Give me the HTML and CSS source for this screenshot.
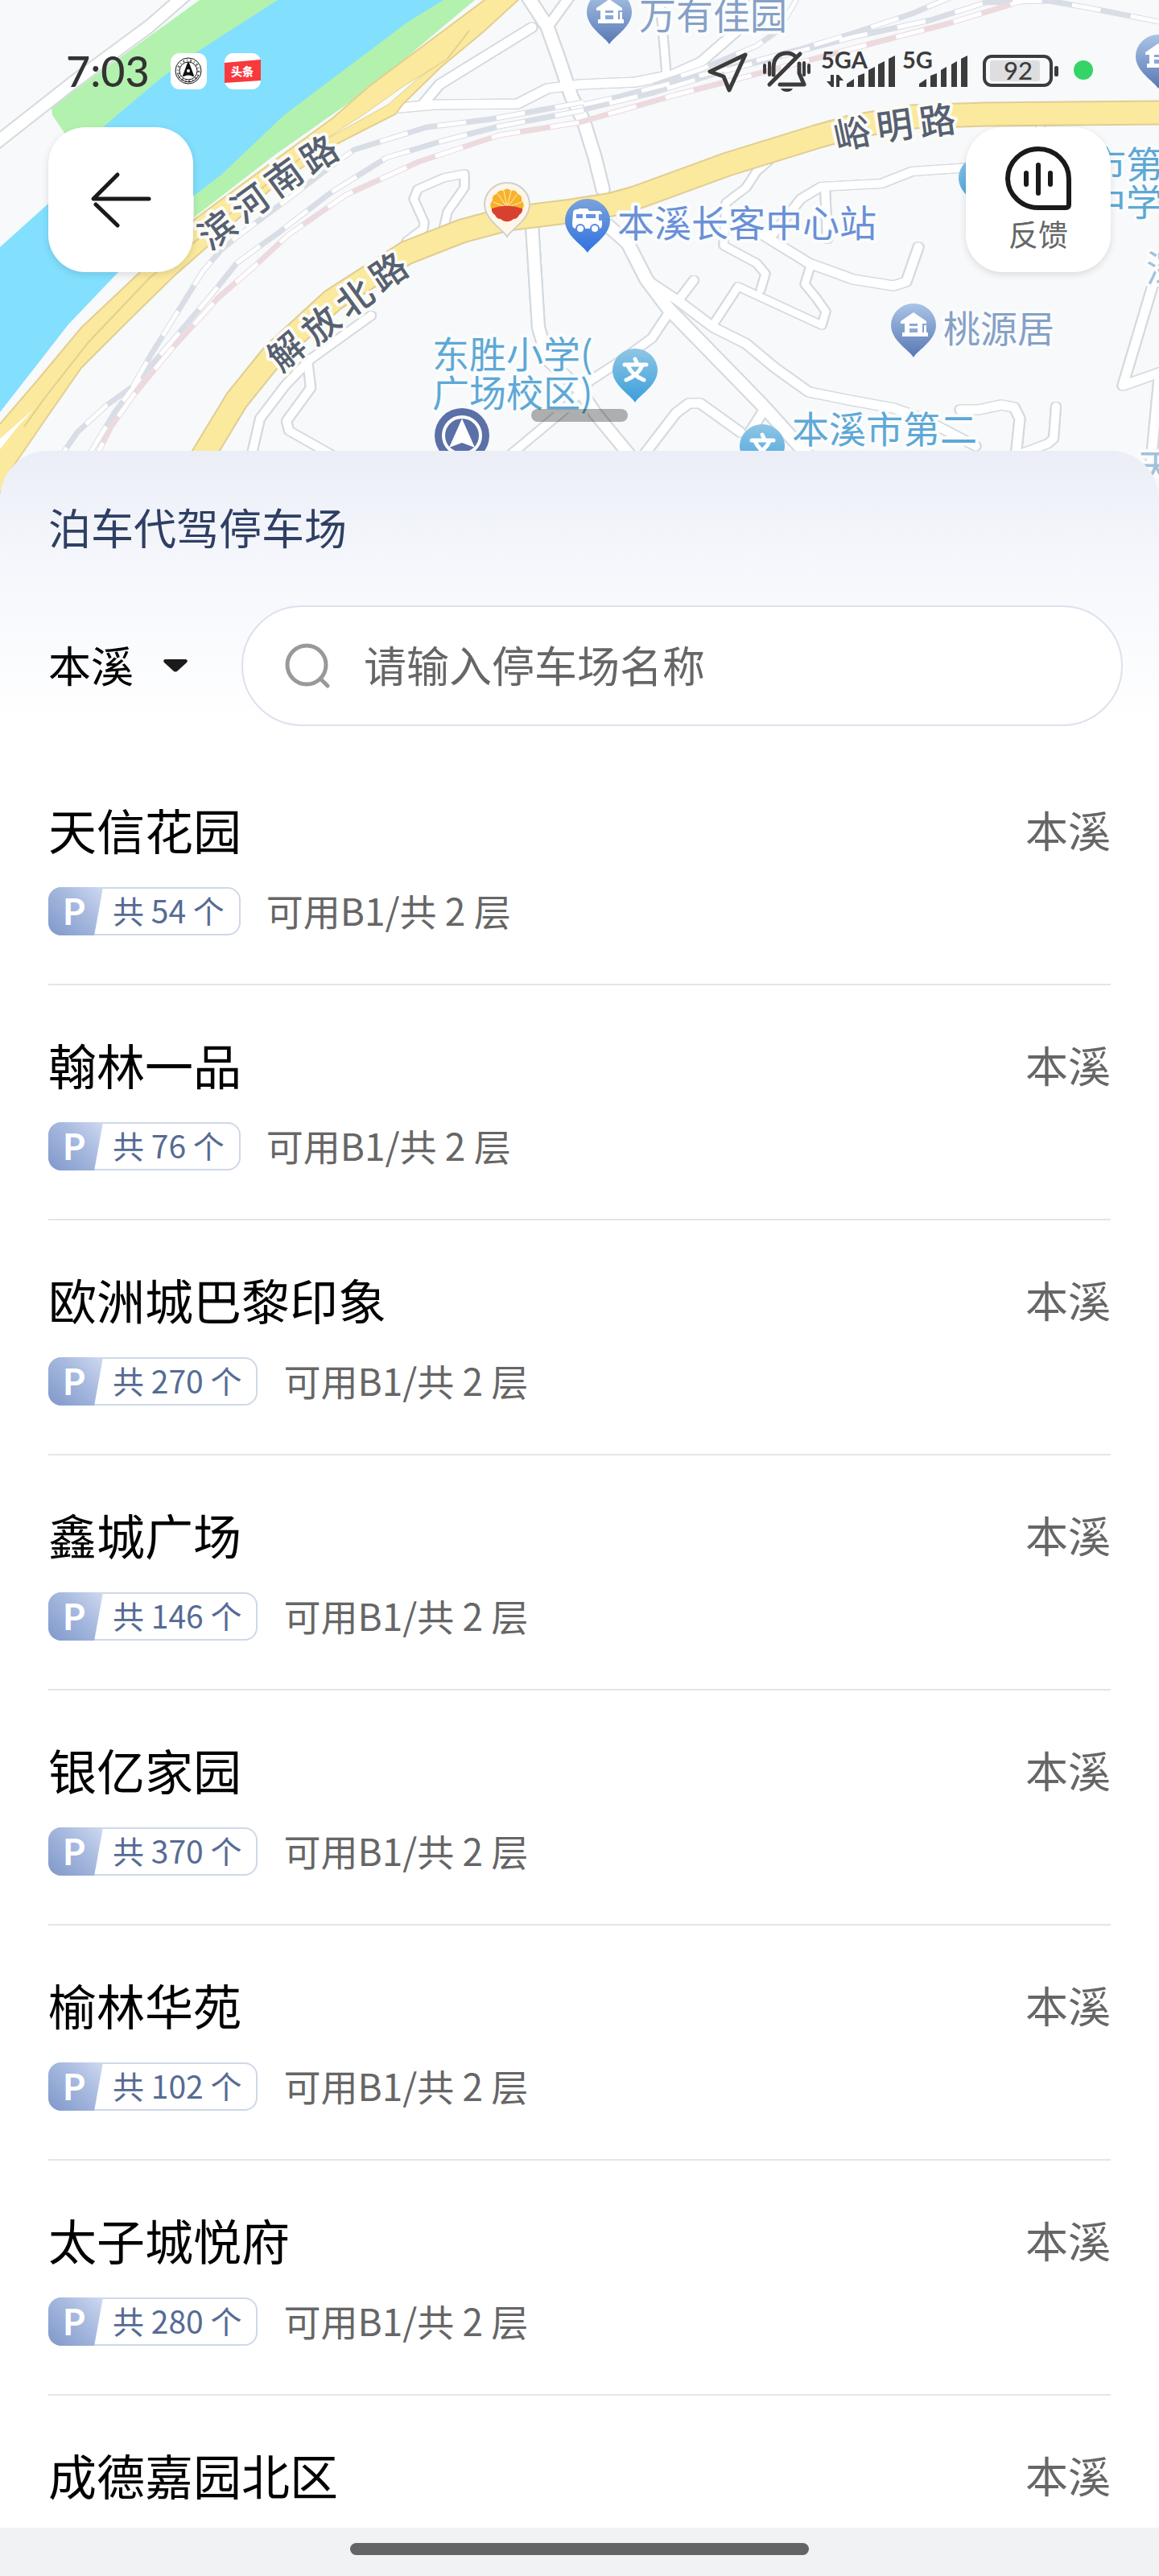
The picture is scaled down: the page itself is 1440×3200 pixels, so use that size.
FILE: index.html
```html
<!DOCTYPE html>
<html lang="zh-CN">
<head>
  <meta charset="UTF-8">
  <meta name="viewport" content="width=device-width, initial-scale=1">
  <title>泊车代驾停车场</title>
  <link rel="stylesheet" href="styles.css">
</head>
<body>
  <div class="app">
    <header class="map-header">
      <svg class="map" viewBox="0 0 1440 620" preserveAspectRatio="xMidYMin slice" aria-hidden="true">
        <defs>
          <linearGradient id="g-house" x1="0" y1="0" x2="0" y2="1">
            <stop offset="0" stop-color="#a9c4e6"/><stop offset="1" stop-color="#5878b4"/>
          </linearGradient>
          <linearGradient id="g-bus" x1="0" y1="0" x2="0" y2="1">
            <stop offset="0" stop-color="#7ba2dc"/><stop offset="1" stop-color="#2f72e0"/>
          </linearGradient>
          <linearGradient id="g-school" x1="0" y1="0" x2="0" y2="1">
            <stop offset="0" stop-color="#8fc6e6"/><stop offset="1" stop-color="#3a9edb"/>
          </linearGradient>
          <path id="pin" d="M0 67 C-5 58 -28 46 -28 27 A28 27 0 0 1 28 27 C28 46 5 58 0 67Z"/>
          <g id="pin-house">
            <use href="#pin" fill="url(#g-house)"/>
            <path d="M-16 22 L0 11 L16 22 V25 H-16Z" fill="#fff"/>
            <path d="M-11 24 H11 V36 H-11Z M-14 36 H18 V41 H-14Z M13 27 H16 V38 H13Z" fill="#fff"/>
            <path d="M-5 25 H5 V28 H-5Z M-5 31 H5 V36 H-5Z" fill="#8ca8d6"/>
          </g>
          <g id="pin-school">
            <use href="#pin" fill="url(#g-school)"/>
            <path d="M-13 20 H14 M0 13 L2 17 M-9 21 Q-4 33 11 39 M9 21 Q4 33 -11 39" fill="none" stroke="#fff" stroke-width="5" stroke-linecap="round"/>
          </g>
          <path id="rail-a" d="M725 127 L610 148 L530 158 L440 186 L400 215 L370 238 L300 290 L275 310 L252 337 L211 403 L188 440 L165 480 L133 503 L96 537 L76 566"/>
          <path id="rail-b" d="M725 137 L620 157 L550 175 L480 196 L410 240 L345 290 L321 307 L294 327 L262 367 L211 427 L174 470 L142 513 L110 566"/>
          <path id="rail-c" d="M1185 -5 L1133 17 L1064 40 L995 61 L839 102 L770 120 L725 130"/>
          <path id="rail-d" d="M1440 27 L1354 10 L1303 1 L1225 3 L1156 25 L1060 46 L904 87 L812 115 L725 136"/>
          <path id="rail-e" d="M992 -5 L968 37 L940 57 L871 86 L812 106"/>
          <path id="rail-p" d="M1290 -5 L1179 29 L1087 53 L959 87 L839 118 L720 152 L620 168 L520 201 L430 242 L358 292 L317 330 L271 370 L211 436 L165 492 L138 530 L120 566"/>
          <path id="main-road" d="M251 568 L294 497 L340 440 L413 373 L505 314 L574 287 L630 272 L703 263 L760 254 L789 246 L904 204 L1014 170 L1060 157 L1133 145 L1225 142 L1445 140"/>
        </defs>

        <rect width="1440" height="620" fill="#f7f9fb"/>

        <!-- river and banks -->
        <path d="M248 0 L64 133 L65 143 L80 165 L140 190 L241 200 L241 270 L342 192 L459 110 L590 0Z" fill="#b2f2ae"/>
        <path d="M345 0 L244 65 L200 97 L155 135 L128 158 L60 253 L0 307 V512 L85 403 L147 338 L241 243 L275 217 L353 143 L507 27 L551 0Z" fill="#82dffe"/>

        <!-- side streets -->
        <g class="streets">
          <path stroke-width="14" d="M230 -6 L185 33 L90 103 L-8 180"/>
          <path stroke-width="15" d="M652 -10 L680 33 L695 75 L710 120 L725 150 L739 195 L749 235"/>
          <path stroke-width="11" d="M712 -10 L680 34 M661 34 L546 105 L525 130"/>
          <path stroke-width="11" d="M496 134 L540 130 L643 129 L680 110 L720 105 L789 102 L835 93 L871 77 L917 37 L942 -5"/>
          <path stroke-width="9" d="M819 -5 L823 33 L828 92"/>
          <path stroke-width="9" d="M551 285 L556 263 L577 233 L577 216 L551 221 L519 235 L514 247 L527 276 L526 284 L505 300"/>
          <path stroke-width="14" d="M661 280 L669 407 L681 447 L720 484 L740 514 L782 565"/>
          <path stroke-width="15" d="M755 280 L780 302 L803 347 L830 383 L947 503 L1003 565"/>
          <path stroke-width="11" d="M807 350 L843 374 L887 407 L927 427 L963 457 L1005 487 L1055 497 L1110 507 L1147 520 L1212 554"/>
          <path stroke-width="10" d="M843 373 L862 348 M830 390 L810 420 L773 447 L733 473 L700 510 L634 565"/>
          <path stroke-width="9" d="M887 402 L917 356 L1021 404 L1026 387 L1014 370 L1000 353 L1007 330"/>
          <path stroke-width="9" d="M945 360 L951 340 L940 327 L899 305 L902 252 L927 233 L940 213 L955 200"/>
          <path stroke-width="11" d="M945 290 L1005 327 L1060 347 L1110 355 L1126 350 L1133 330 L1141 307"/>
          <path stroke-width="10" d="M959 293 L995 247 L1020 232 L1095 228 L1133 213 L1205 208 M1025 232 L1028 297"/>
          <path stroke-width="11" d="M800 565 L840 513 L856 501 L870 501 L920 537 M950 508 L930 540"/>
          <path stroke-width="11" d="M1193 509 L1216 509 L1244 503 L1260 506 L1267 520 L1262 568"/>
          <path stroke-width="10" d="M1312 505 L1309 545 L1302 551 L1270 563"/>
          <path stroke-width="11" d="M1435 345 L1395 479 L1446 461 M1440 470 L1430 575"/>
          <path stroke-width="10" d="M461 392 L386 446 L355 478 L323 520 L312 568 M382 446 L386 482 L356 523 L359 535 L412 565"/>
          <path stroke-width="8" d="M1290 165 L1294 152 L1325 150 M1445 222 L1436 240 L1448 252"/>
        </g>

        <!-- railways -->
        <g class="rail">
          <use href="#rail-a"/><use href="#rail-b"/><use href="#rail-c"/><use href="#rail-d"/><use href="#rail-e"/>
          <use href="#rail-p" class="rail-pink"/>
        </g>
        <g class="rail-dash">
          <use href="#rail-a"/><use href="#rail-b"/><use href="#rail-c"/><use href="#rail-d"/><use href="#rail-e"/><use href="#rail-p"/>
        </g>

        <!-- main roads -->
        <path d="M606 -3 L459 107 L413 147 L340 200 L241 273 L174 338 L101 407 L46 473 L-3 530 V620 L14 583 L55 523 L101 457 L161 397 L216 343 L257 307 L340 232 L420 178 L455 160 L491 142 L500 130 L547 84 L600 40 L647 -3Z" fill="#fbe99d" stroke="#e3cf90" stroke-width="2"/>
        <path d="M556 73 L520 97 L482 130 L400 176 L455 140 L500 108Z" fill="#f9fafc" stroke="#e3cf90"/>
        <path d="M583 38 L556 73 M400 176 L330 230 L186 345 L110 425 L55 495 L30 530" fill="none" stroke="#e3cf90" stroke-width="2"/>
        <path d="M42 508 L22 530 L0 558 V545Z" fill="#fff"/>
        <g fill="none" stroke-linejoin="round">
          <use href="#main-road" stroke="#e0cd93" stroke-width="31"/>
          <use href="#main-road" stroke="#fbe99d" stroke-width="27"/>
        </g>

        <!-- road names follow the road, one glyph at a time -->
        <g class="road-name">
          <text transform="translate(268 283) rotate(-36)">滨</text>
          <text transform="translate(309 250) rotate(-36)">河</text>
          <text transform="translate(351 218) rotate(-36)">南</text>
          <text transform="translate(395 189) rotate(-32)">路</text>
          <text transform="translate(354 434) rotate(-40)">解</text>
          <text transform="translate(397 401) rotate(-40)">放</text>
          <text transform="translate(439 368) rotate(-36)">北</text>
          <text transform="translate(481 335) rotate(-34)">路</text>
          <text transform="translate(1058 163) rotate(-12)">峪</text>
          <text transform="translate(1111 153) rotate(-8)">明</text>
          <text transform="translate(1164 147) rotate(-8)">路</text>
        </g>

        <!-- points of interest -->
        <g class="poi">
          <text class="poi-estate" x="794" y="36">万有佳园</text>
          <text class="poi-station" x="767" y="294">本溪长客中心站</text>
          <text class="poi-estate" x="1172" y="425">桃源居</text>
          <text class="poi-school" x="537" y="457">东胜小学(</text>
          <text class="poi-school" x="537" y="505">广场校区)</text>
          <text class="poi-school" x="984" y="550">本溪市第二</text>
          <text class="poi-school" x="1353" y="221">市第</text>
          <text class="poi-school" x="1353" y="268">中学</text>
          <text class="poi-faint" x="1424" y="350">深</text>
          <text class="poi-faint" x="1413" y="597">天</text>
        </g>
        <use href="#pin-house" x="757" y="-12"/>
        <use href="#pin-house" x="1135" y="377"/>
        <use href="#pin-house" x="1439" y="43"/>
        <use href="#pin-school" x="789" y="433"/>
        <use href="#pin-school" x="947" y="527"/>
        <use href="#pin-school" x="1219" y="194"/>
        <g transform="translate(730 247)">
          <use href="#pin" fill="url(#g-bus)"/>
          <path d="M-18 17 Q-18 13 -12 13 L-10 12 H0 L2 15 H14 Q18 15 18 19 V32 Q18 37 14 37 H-14 Q-19 37 -19 31Z" fill="#fff"/>
          <path d="M-14 19 H-6 V24 H-14Z M-2 19 H10 V24 H-2Z M14 19 H18 V27 H14Z" fill="#6a93dc"/>
          <circle cx="-9" cy="37" r="5" fill="#fff" stroke="#5588e0" stroke-width="2"/>
          <circle cx="9" cy="37" r="5" fill="#fff" stroke="#5588e0" stroke-width="2"/>
        </g>
        <g transform="translate(630 227)">
          <use href="#pin" fill="#fdf7ea" stroke="#d2cfcc" stroke-width="2"/>
          <path d="M-19 33 Q-23 27 -18 22 Q-19 15 -13 14 Q-10 8 -5 10 Q0 5 5 10 Q11 8 13 14 Q19 15 18 22 Q23 27 19 33Z" fill="#f8b12b"/>
          <path d="M0 31 L-17 24 M0 31 L-11 14 M0 31 L-4 10 M0 31 L5 10 M0 31 L12 15 M0 31 L18 24" stroke="#fff3c4" stroke-width="1"/>
          <path d="M-19 32 Q0 25 19 32 Q20 37 15 40 Q13 45 8 45 Q4 49 0 48 Q-4 49 -8 45 Q-13 45 -15 40 Q-20 37 -19 32Z" fill="#d8412f"/>
        </g>
        <g transform="translate(574 541)">
          <circle r="34" fill="#5a70a7"/>
          <circle r="23" fill="none" stroke="#fff" stroke-width="4"/>
          <path d="M0 -21 L16 15 L0 9 L-16 15Z" fill="#fff"/>
        </g>
      </svg>

      <div class="status-bar">
        <span class="clock">7:03</span>
        <svg class="app-icon" viewBox="0 0 45 45" aria-hidden="true">
          <rect width="45" height="45" rx="11" fill="#fff"/>
          <g fill="none" stroke="#111">
            <circle cx="22" cy="22" r="16"/>
            <circle cx="22" cy="22" r="11"/>
            <path d="M9 27 A14 14 0 0 0 35 27"/>
            <circle cx="22" cy="22" r="13" stroke-width="3" stroke-dasharray="2 3 1 3" opacity=".6"/>
          </g>
          <path d="M22 12 L28 28 Q22 25 16 28Z" fill="#111" stroke="#111" stroke-width="2" stroke-linejoin="round"/>
          <circle cx="22" cy="22" r="2" fill="#fff"/>
        </svg>
        <svg class="app-icon" viewBox="0 0 45 45" aria-hidden="true">
          <rect width="45" height="45" rx="11" fill="#fff"/>
          <path d="M0 12 L45 8 V34 L0 37Z" fill="#f8393d"/>
          <text x="22" y="28" text-anchor="middle" class="app-icon-text">头条</text>
        </svg>

        <svg class="status-icons" viewBox="876 58 488 60" aria-hidden="true">
          <g fill="none" stroke="#3c3c3c" stroke-linejoin="round" stroke-linecap="round">
            <path d="M926 68 L882 89 L899 95 L906 112Z" stroke-width="5"/>
            <path d="M961 93 V83 Q962 66 978 66 Q984 66 988 70 M993 79 V91 L999 105 H969" stroke-width="5"/>
            <path d="M956 105 L994 67" stroke-width="5"/>
            <path d="M950 81 V90 M956 78 V93 M1005 81 V90" stroke-width="4"/>
            <path d="M999 78 V93" stroke-width="4"/>
            <rect x="1223" y="70" width="83" height="36" rx="9" stroke-width="4"/>
          </g>
          <path d="M970 110 H985 Q983 114 978 114 Q972 114 970 110Z" fill="#3c3c3c"/>
          <rect x="1230" y="75" width="62" height="26" rx="3" fill="#dedee0"/>
          <g fill="#3c3c3c">
            <rect x="1310" y="82" width="5" height="13" rx="2"/>
            <path d="M1052 108 V104 L1061 98 V108Z M1066 108 V94 L1074 91 V108Z M1079 108 V87 L1087 83 V108Z M1091 108 V80 L1099 76 V108Z M1104 108 V73 L1112 69 V108Z"/>
            <path d="M1142 108 V104 L1151 98 V108Z M1156 108 V94 L1164 91 V108Z M1169 108 V87 L1176 83 V108Z M1182 108 V80 L1189 76 V108Z M1194 108 V73 L1202 69 V108Z"/>
            <path d="M1032 93 H1036 V108 H1033 L1027 101 H1032Z M1039 93 H1042 L1048 100 H1043 V108 H1039Z"/>
            <text x="1020" y="85" class="net-text">5GA</text>
            <text x="1121" y="85" class="net-text">5G</text>
            <text x="1265" y="99" text-anchor="middle" class="battery-text">92</text>
          </g>
          <circle cx="1346" cy="87" r="12" fill="#35d466"/>
        </svg>
      </div>

      <div class="map-actions">
        <button class="map-btn" type="button" aria-label="返回">
          <svg width="90" height="90" viewBox="0 0 90 90" fill="none" stroke="#1a1a1a" stroke-width="5" stroke-linecap="round" stroke-linejoin="round">
            <path d="M41 14 L11 44 H80"/>
            <path d="M14 51 L41 77"/>
          </svg>
        </button>
        <button class="map-btn" type="button">
          <svg width="90" height="84" viewBox="0 0 90 84" fill="none" stroke="#1a1a1a" stroke-width="6" stroke-linecap="round" stroke-linejoin="round">
            <path d="M45 3 A38 37 0 0 0 7 40 A38 37 0 0 0 45 76 H79 Q83 76 83 72 V40 A38 37 0 0 0 45 3Z"/>
            <path d="M30 33 V47 M45 23 V58 M60 33 V47"/>
          </svg>
          <span>反馈</span>
        </button>
      </div>

      <div class="drag-handle"></div>
    </header>

    <main class="sheet">
      <h1>泊车代驾停车场</h1>

      <form class="search-row">
        <label class="city">
          <select aria-label="城市">
            <option>本溪</option>
          </select>
          <svg width="32" height="18" viewBox="0 0 32 18" aria-hidden="true">
            <path d="M3 1 H29 Q32 2 30 5 L19 15 Q16 18 13 15 L2 5 Q0 2 3 1Z" fill="#1a1a1a"/>
          </svg>
        </label>
        <label class="search-box">
          <svg width="60" height="60" viewBox="0 0 60 60" fill="none" stroke="#999" stroke-width="5" stroke-linecap="round" aria-hidden="true">
            <circle cx="29" cy="29" r="24"/>
            <path d="M46 46 L55 55"/>
          </svg>
          <input type="search" placeholder="请输入停车场名称" aria-label="停车场名称">
        </label>
      </form>

      <ul class="lots">
        <li class="lot">
          <div class="lot-head"><h2>天信花园</h2><span class="lot-city">本溪</span></div>
          <div class="lot-info"><span class="badge"><b>P</b><span>共 54 个</span></span><span>可用B1/共 2 层</span></div>
        </li>
        <li class="lot">
          <div class="lot-head"><h2>翰林一品</h2><span class="lot-city">本溪</span></div>
          <div class="lot-info"><span class="badge"><b>P</b><span>共 76 个</span></span><span>可用B1/共 2 层</span></div>
        </li>
        <li class="lot">
          <div class="lot-head"><h2>欧洲城巴黎印象</h2><span class="lot-city">本溪</span></div>
          <div class="lot-info"><span class="badge"><b>P</b><span>共 270 个</span></span><span>可用B1/共 2 层</span></div>
        </li>
        <li class="lot">
          <div class="lot-head"><h2>鑫城广场</h2><span class="lot-city">本溪</span></div>
          <div class="lot-info"><span class="badge"><b>P</b><span>共 146 个</span></span><span>可用B1/共 2 层</span></div>
        </li>
        <li class="lot">
          <div class="lot-head"><h2>银亿家园</h2><span class="lot-city">本溪</span></div>
          <div class="lot-info"><span class="badge"><b>P</b><span>共 370 个</span></span><span>可用B1/共 2 层</span></div>
        </li>
        <li class="lot">
          <div class="lot-head"><h2>榆林华苑</h2><span class="lot-city">本溪</span></div>
          <div class="lot-info"><span class="badge"><b>P</b><span>共 102 个</span></span><span>可用B1/共 2 层</span></div>
        </li>
        <li class="lot">
          <div class="lot-head"><h2>太子城悦府</h2><span class="lot-city">本溪</span></div>
          <div class="lot-info"><span class="badge"><b>P</b><span>共 280 个</span></span><span>可用B1/共 2 层</span></div>
        </li>
        <li class="lot">
          <div class="lot-head"><h2>成德嘉园北区</h2><span class="lot-city">本溪</span></div>
        </li>
      </ul>
    </main>

    <footer class="nav-bar"><div class="nav-pill"></div></footer>
  </div>
</body>
</html>
```
FILE: styles.css
```css
* {
  box-sizing: border-box;
}
body {
  margin: 0;
  font-family: "Noto Sans CJK SC", "Noto Sans", sans-serif;
  color: #000;
  background: #fff;
}
button, input, select {
  font: inherit;
  border: 0;
  padding: 0;
  background: none;
}
h1, h2, ul {
  margin: 0;
  padding: 0;
  font-weight: 400;
}
.app {
  display: flex;
  flex-direction: column;
  height: 100vh;
  overflow: hidden;
}

/* map */
.map-header {
  position: relative;
  flex: none;
  display: flex;
  flex-direction: column;
  height: 560px;
  padding: 58px 60px 0;
}
.map {
  position: absolute;
  top: 0;
  left: 0;
  width: 100%;
  height: 620px;
}
.streets, .rail, .rail-dash {
  fill: none;
  stroke-linecap: round;
  stroke-linejoin: round;
}
/* the shadows draw one outline round the joined streets */
.streets {
  stroke: #fff;
  filter: drop-shadow(2px 0 0 #d5dade) drop-shadow(-2px 0 0 #d5dade) drop-shadow(0 1px 0 #d5dade) drop-shadow(0 -1px 0 #d5dade);
}
.rail {
  stroke: #d9dde5;
  stroke-width: 7px;
  stroke-linecap: butt;
}
.rail-pink {
  stroke: #ecdadf;
}
.rail-dash {
  stroke: #fff;
  stroke-width: 5px;
  stroke-linecap: butt;
  stroke-dasharray: 36 38;
}
.road-name text {
  font-size: 45px;
  font-weight: 500;
  fill: #566072;
  stroke: #fbfbf6;
  stroke-width: 8px;
  stroke-linejoin: round;
  paint-order: stroke;
  text-anchor: middle;
  dominant-baseline: central;
}
.poi text {
  font-size: 46px;
  stroke: #fafcfd;
  stroke-width: 8px;
  stroke-linejoin: round;
  paint-order: stroke;
}
.poi .poi-estate {
  fill: #86a0c6;
}
.poi .poi-station {
  fill: #6a90d6;
}
.poi .poi-school {
  fill: #5ea8d5;
}
.poi .poi-faint {
  fill: #a0c2da;
}

/* status bar */
.status-bar {
  position: relative;
  display: flex;
  align-items: center;
  gap: 22px;
  height: 60px;
  margin-right: 16px;
  padding-left: 22px;
}
.clock {
  width: 108px;
  font-family: Lato, sans-serif;
  font-size: 52px;
  font-weight: 500;
  line-height: 60px;
  color: #333;
}
.app-icon {
  width: 45px;
  height: 45px;
}
.app-icon-text {
  font-size: 14px;
  font-weight: 900;
  fill: #fff;
}
.status-icons {
  width: 488px;
  height: 60px;
  margin-left: auto;
}
.net-text {
  font-family: Lato, sans-serif;
  font-size: 29px;
  font-weight: 700;
}
.battery-text {
  font-family: Lato, sans-serif;
  font-size: 31px;
  font-weight: 500;
}

.map-actions {
  position: relative;
  display: flex;
  justify-content: space-between;
  margin-top: 40px;
}
.map-btn {
  display: flex;
  flex-direction: column;
  align-items: center;
  justify-content: center;
  width: 180px;
  height: 180px;
  border-radius: 46px;
  background: #fff;
  box-shadow: 0 3px 10px rgba(0, 0, 0, 0.12);
  font-size: 37px;
  line-height: 48px;
  color: #666;
}
.drag-handle {
  position: relative;
  width: 120px;
  height: 16px;
  margin: 170px auto 0;
  border-radius: 8px;
  background: rgba(0, 0, 0, 0.3);
}

/* list sheet */
.sheet {
  position: relative;
  flex: 1;
  min-height: 0;
  overflow: hidden;
  padding: 60px 60px 0;
  border-radius: 60px 60px 0 0;
  background: linear-gradient(#ebeef6, #f5f7fc 140px, #fff 340px);
}
h1 {
  font-size: 53px;
  line-height: 68px;
  color: #2f3f63;
}
.search-row {
  display: flex;
  align-items: center;
  gap: 66px;
  margin: 64px -15px 30px 0;
}
.city {
  display: flex;
  align-items: center;
  gap: 36px;
}
.city select {
  appearance: none;
  padding-bottom: 4px;
  font-size: 53px;
  line-height: 68px;
  color: #000;
}
.search-box {
  flex: 1;
  display: flex;
  align-items: center;
  gap: 40px;
  height: 150px;
  padding: 0 50px;
  border: 2px solid #dde1ed;
  border-radius: 75px;
  background: #fff;
}
.search-box input {
  flex: 1;
  min-width: 0;
  padding-bottom: 4px;
  font-size: 53px;
  line-height: 68px;
  outline: 0;
  appearance: none;
}
.search-box input::placeholder {
  color: #666;
  opacity: 1;
}
.lots {
  list-style: none;
}
.lot {
  padding: 60px 0;
  border-bottom: 2px solid #e5e5e5;
}
.lot-head {
  display: flex;
  align-items: center;
  justify-content: space-between;
  margin-bottom: 34px;
}
.lot h2 {
  font-size: 60px;
  line-height: 76px;
}
.lot-city {
  font-size: 53px;
  line-height: 76px;
  color: #666;
}
.lot-info {
  display: flex;
  align-items: flex-start;
  gap: 32px;
  height: 60px;
  font-size: 46px;
  line-height: 56px;
  color: #666;
}
.badge {
  display: flex;
  height: 60px;
  padding-right: 20px;
  border-radius: 16px;
  box-shadow: inset 0 0 0 2px #cfd8e8;
  overflow: hidden;
  font-size: 39px;
  color: #566b94;
}
.badge b {
  width: 68px;
  margin-right: 12px;
  padding-left: 18px;
  font-family: Lato, sans-serif;
  font-size: 45px;
  font-weight: 700;
  line-height: 60px;
  color: #fff;
  background: linear-gradient(45deg, #7f98ca, #a9bbe0 60%, #cfdaf1);
  clip-path: polygon(0 0, 100% 0, 84% 100%, 0 100%);
}

/* system navigation */
.nav-bar {
  flex: none;
  height: 60px;
  padding-top: 19px;
  background: #f1f2f4;
}
.nav-pill {
  width: 570px;
  height: 15px;
  margin: 0 auto;
  border-radius: 8px;
  background: #636466;
}
```
